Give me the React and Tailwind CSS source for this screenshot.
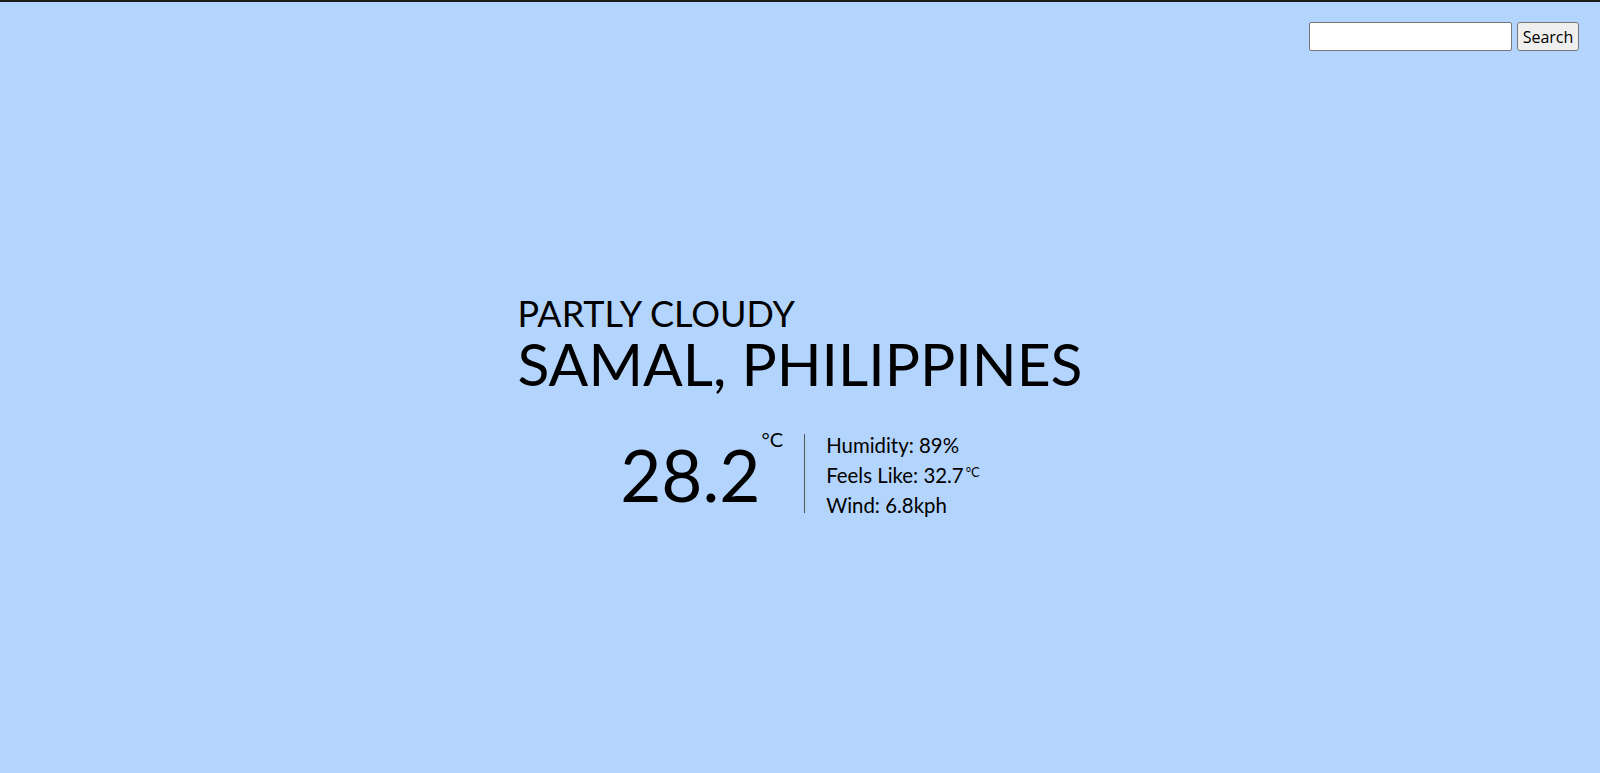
import React, { useState } from 'react'

const weather = {
  condition: 'Partly Cloudy',
  location: 'Samal, Philippines',
  temp: 28.2,
  humidity: 89,
  feelsLike: 32.7,
  wind: 6.8,
}

function SearchBar() {
  const [query, setQuery] = useState('')
  return (
    <form className="flex items-center justify-end gap-[5px] pt-[20px] pr-[21px]" onSubmit={(e) => e.preventDefault()}>
      <input
        value={query}
        onChange={(e) => setQuery(e.target.value)}
        className="w-[203px] h-[29px] bg-white border border-[#767676] rounded-[2px] px-1 text-[16px] outline-none"
      />
      <button className="w-[62px] h-[29px] bg-[#efefef] border border-[#767676] rounded-[3px] text-[16px] text-black font-['Open_Sans',sans-serif] leading-none">
        Search
      </button>
    </form>
  )
}

export default function App() {
  return (
    <div className="min-h-screen flex flex-col bg-[#b3d4fc] border-t-2 border-[#1c1c1c] text-black font-['Lato',sans-serif]">
      <SearchBar />

      <main className="flex-1 flex items-start justify-center pt-[244px]">
        <div className="flex flex-col">
          <h2 className="uppercase text-[36px] leading-[37px]">{weather.condition}</h2>
          <h1 className="uppercase text-[58.8px] leading-[63px]">{weather.location}</h1>

          <div className="flex items-start justify-center mt-[39px]">
            <div className="flex items-start">
              <span className="text-[71px] leading-none mt-[5px]">{weather.temp}</span>
              <span className="text-[20px] leading-none ml-[1px] -mt-[5px]">°C</span>
            </div>
            <div className="w-px h-[79px] bg-[#555] ml-[21px]" />
            <div className="flex flex-col pl-[21px] -mt-[4px] text-[20.4px] leading-[30px]">
              <span>Humidity: {weather.humidity}%</span>
              <span>
                Feels Like: {weather.feelsLike}
                <sup className="text-[13px] ml-[2px]">°C</sup>
              </span>
              <span>Wind: {weather.wind}kph</span>
            </div>
          </div>
        </div>
      </main>
    </div>
  )
}
